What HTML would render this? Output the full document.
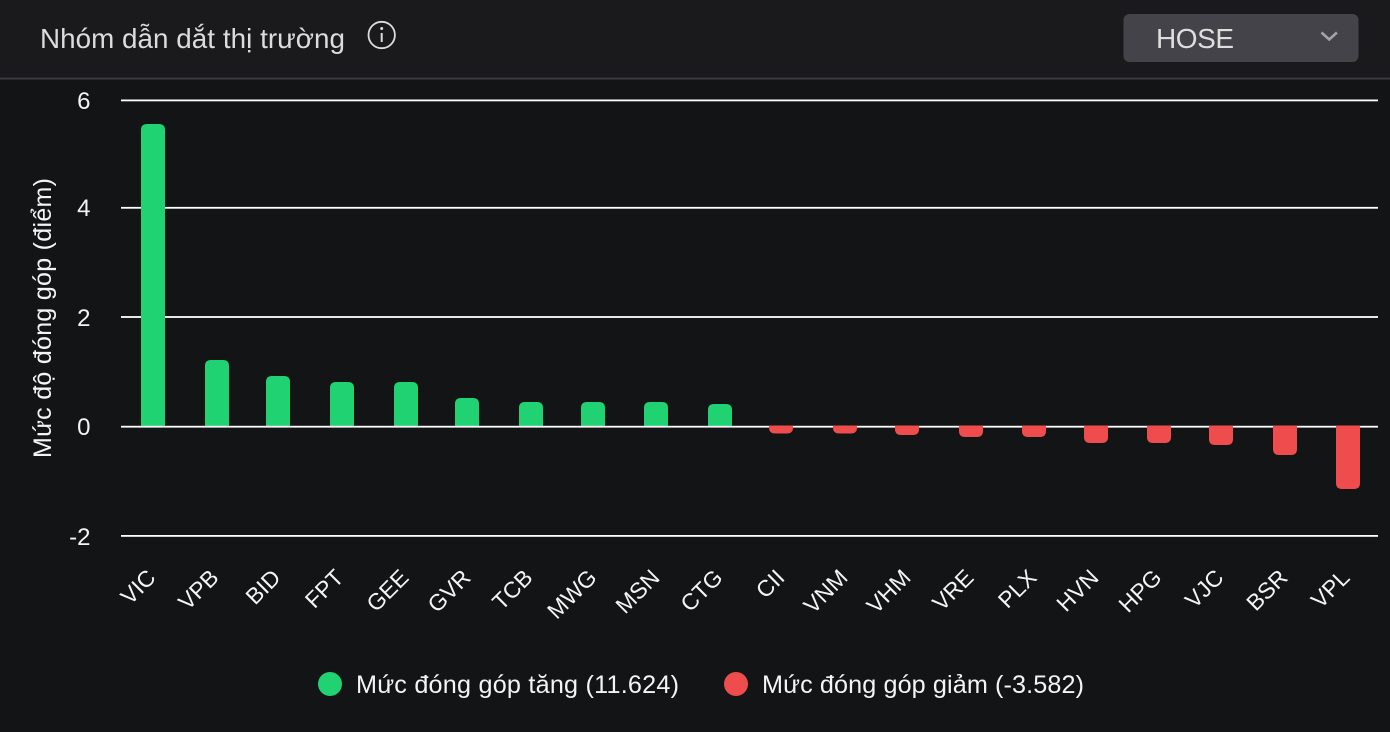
<!DOCTYPE html>
<html><head><meta charset="utf-8">
<style>
html,body{margin:0;padding:0;background:#131416;width:1390px;height:732px;overflow:hidden}
svg{display:block;font-family:"Liberation Sans",sans-serif}
</style></head>
<body>
<svg width="1390" height="732" viewBox="0 0 1390 732" xmlns="http://www.w3.org/2000/svg">
<rect width="1390" height="732" fill="#131416"/>
<rect width="1390" height="78" fill="#1a1a1c"/>
<rect y="77.700" width="1390" height="1.800" fill="#3c3d42"/>
<text x="40" y="48" font-size="27.800" fill="#dcdcdc" textLength="305">Nhóm dẫn dắt thị trường</text>
<g fill="none" stroke="#dcdcdc" stroke-width="1.800"><circle cx="381.700" cy="35" r="13.200"/><path d="M381.700 33v9" stroke-width="2"/></g>
<circle cx="381.700" cy="28.500" r="1.500" fill="#dcdcdc"/>
<rect x="1123.500" y="14" width="235" height="48" rx="6" fill="#434349"/>
<text x="1156" y="48" font-size="28" fill="#dedede" textLength="78">HOSE</text>
<path d="M1321.500 32.500l7.700 7 7.700-7" fill="none" stroke="#a3a3a8" stroke-width="2.600"/>

<g fill="#ffffff">
<rect x="121" y="99.500" width="1257" height="1.800"/>
<rect x="121" y="206.900" width="1257" height="1.800"/>
<rect x="121" y="316.100" width="1257" height="1.800"/>
<rect x="121" y="535" width="1257" height="1.800"/>
</g>
<g font-size="24" fill="#f4f4f4" text-anchor="end">
<text x="90.500" y="109">6</text>
<text x="90.500" y="216">4</text>
<text x="90.500" y="326">2</text>
<text x="90.500" y="435">0</text>
<text x="90.500" y="545">-2</text>
</g>
<text transform="translate(51 318) rotate(-90)" font-size="25" fill="#f4f4f4" text-anchor="middle" textLength="280">Mức độ đóng góp (điểm)</text>

<g fill="#20d272">
<path d="M141 426V130q0-6 6-6h12q6 0 6 6v296z"/>
<path d="M205 426V366q0-6 6-6h12q6 0 6 6v60z"/>
<path d="M266 426V382q0-6 6-6h12q6 0 6 6v44z"/>
<path d="M330 426V388q0-6 6-6h12q6 0 6 6v38z"/>
<path d="M394 426V388q0-6 6-6h12q6 0 6 6v38z"/>
<path d="M455 426V404q0-6 6-6h12q6 0 6 6v22z"/>
<path d="M519 426V408q0-6 6-6h12q6 0 6 6v18z"/>
<path d="M581 426V408q0-6 6-6h12q6 0 6 6v18z"/>
<path d="M644 426V408q0-6 6-6h12q6 0 6 6v18z"/>
<path d="M708 426V410q0-6 6-6h12q6 0 6 6v16z"/>
</g>
<rect x="121" y="425.800" width="1257" height="1.800" fill="#ffffff"/>
<g fill="#ef4d4d">
<path d="M769 427.500v-2h24v2q0 6-6 6h-12q-6 0-6-6z"/>
<path d="M833 427.500v-2h24v2q0 6-6 6h-12q-6 0-6-6z"/>
<path d="M895 429v-3.500h24v3.500q0 6-6 6h-12q-6 0-6-6z"/>
<path d="M959 431v-5.500h24v5.500q0 6-6 6h-12q-6 0-6-6z"/>
<path d="M1022 431v-5.500h24v5.500q0 6-6 6h-12q-6 0-6-6z"/>
<path d="M1084 437v-11.500h24v11.500q0 6-6 6h-12q-6 0-6-6z"/>
<path d="M1147 437v-11.500h24v11.500q0 6-6 6h-12q-6 0-6-6z"/>
<path d="M1209 439v-13.500h24v13.500q0 6-6 6h-12q-6 0-6-6z"/>
<path d="M1273 449v-23.500h24v23.500q0 6-6 6h-12q-6 0-6-6z"/>
<path d="M1336 483v-57.500h24v57.500q0 6-6 6h-12q-6 0-6-6z"/>
</g>

<g font-size="22.800" fill="#f4f4f4" text-anchor="end">
<text transform="translate(157 579) rotate(-45)">VIC</text>
<text transform="translate(220 579) rotate(-45)">VPB</text>
<text transform="translate(282 579) rotate(-45)">BID</text>
<text transform="translate(345 579) rotate(-45)">FPT</text>
<text transform="translate(410 579) rotate(-45)">GEE</text>
<text transform="translate(472 579) rotate(-45)">GVR</text>
<text transform="translate(534 579) rotate(-45)">TCB</text>
<text transform="translate(598 579) rotate(-45)">MWG</text>
<text transform="translate(661 579) rotate(-45)">MSN</text>
<text transform="translate(724 579) rotate(-45)">CTG</text>
<text transform="translate(786 579) rotate(-45)">CII</text>
<text transform="translate(849 579) rotate(-45)">VNM</text>
<text transform="translate(912 579) rotate(-45)">VHM</text>
<text transform="translate(975 579) rotate(-45)">VRE</text>
<text transform="translate(1038 579) rotate(-45)">PLX</text>
<text transform="translate(1100 579) rotate(-45)">HVN</text>
<text transform="translate(1163 579) rotate(-45)">HPG</text>
<text transform="translate(1225 579) rotate(-45)">VJC</text>
<text transform="translate(1289 579) rotate(-45)">BSR</text>
<text transform="translate(1351 579) rotate(-45)">VPL</text>
</g>

<circle cx="330" cy="684" r="12" fill="#20d272"/>
<text x="356" y="693" font-size="25.200" fill="#f4f4f4" textLength="323">Mức đóng góp tăng (11.624)</text>
<circle cx="736" cy="684" r="12" fill="#ef4d4d"/>
<text x="762" y="693" font-size="25.200" fill="#f4f4f4" textLength="322">Mức đóng góp giảm (-3.582)</text>
</svg>
</body></html>
